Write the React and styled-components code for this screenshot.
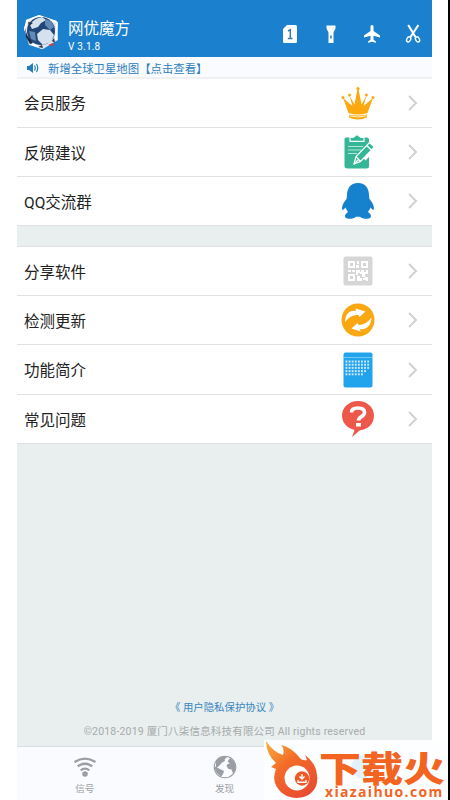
import React from "react";
import styled, { createGlobalStyle } from "styled-components";

const Global = createGlobalStyle`
  * { box-sizing: border-box; }
  body { margin: 0; background: #fff; font-family: Roboto, "Noto Sans CJK SC", sans-serif; overflow: hidden; }
  svg { display: block; flex: none; }
`;
const Page = styled.div`
  position: relative; width: 450px; height: 800px; padding: 0 16px 0 17px;
  background: #fff; border-right: 2px solid #000; overflow: hidden;
`;
const Screen = styled.main`
  width: 415px; height: 800px; display: flex; flex-direction: column; background: #e9eeee;
`;
const Header = styled.header`
  height: 57px; flex: none; display: flex; background: #1b80ce; color: #fff; padding: 13px 9px 0 6px;
`;
const Brand = styled.div`
  margin-left: 9px; flex: 1; padding-top: 5px;
`;
const Title = styled.h1`
  margin: 0; font-size: 15.5px; line-height: 22px; font-weight: 400;
`;
const Version = styled.div`
  font-size: 10px; line-height: 14px; letter-spacing: .2px;
`;
const Tools = styled.div`
  display: flex; gap: 21px; padding-top: 11px; height: 31px;
`;
const Notice = styled.div`
  height: 22px; flex: none; display: flex; align-items: center; background: #fafbfe;
  border-bottom: 2px solid #f0f1f2; color: #2b80bd; font-size: 11.4px; padding: 1px 0 0 9px; gap: 9px;
`;
const Group = styled.section`
  flex: none; background: #fff; margin-bottom: ${p => p.$gap || 0}px;
  border-top: ${p => (p.$line ? "1px solid #dfe2e2" : "0")};
`;
const Row = styled.div`
  height: ${p => p.$h || 49}px; border-bottom: 1px solid #e0e2e2; display: flex; align-items: center;
  padding: 0 13px 0 7px;
`;
const Label = styled.span`
  flex: 1; font-size: 15.5px; color: #222; line-height: 24px; padding-top: ${p => p.$drop}px;
`;
const IconSlot = styled.span`
  width: 36px; height: 38px; display: flex; align-items: center; justify-content: center; margin-right: 31px;
`;
const Legal = styled.footer`
  flex: 1; display: flex; flex-direction: column; justify-content: flex-end; align-items: center; padding-bottom: 6px;
`;
const Privacy = styled.div`
  color: #3687bf; font-size: 10.4px; line-height: 16px; margin-bottom: 8px; white-space: pre;
`;
const Copyright = styled.div`
  color: #a6abac; font-size: 10.5px; line-height: 16px; letter-spacing: .19px; white-space: nowrap;
`;
const Tabs = styled.nav`
  height: 54px; flex: none; display: flex; background: #fafbfe; border-top: 1px solid #d9dede;
  padding-right: 1px;
`;
const Tab = styled.div`
  flex: 1; display: flex; flex-direction: column; align-items: center; padding-top: 8px;
  color: ${p => (p.$active ? "#1b80ce" : "#9a9da3")}; font-size: 9.6px; line-height: 14px; gap: 3px;
  padding-right: ${p => p.$shift || 0}px;
`;
const Watermark = styled.aside`
  position: absolute; left: 264px; top: 740px; width: 184px; height: 60px;
  background: radial-gradient(circle at 99px 27px, #e2f1fb 0 11px, #fdfeff 12px);
  display: flex; padding: 0 0 0 2px;
`;
const WatermarkText = styled.div`
  width: 129px; color: #f2641f; padding-top: 10px;
`;
const WatermarkName = styled.div`
  font: 900 35px/34px "Noto Sans CJK SC", sans-serif; height: 34px; white-space: nowrap;
  width: 105px; transform: scaleX(1.2); transform-origin: left top;
`;
const WatermarkUrl = styled.div`
  font: 700 14px/15px "Open Sans", sans-serif; height: 15px; letter-spacing: 1.35px; padding-left: 6px; white-space: nowrap;
`;

const Logo = () => (
  <svg width="36" height="38" viewBox="0 0 36 38">
    <path d="M16 2 34 8 35 27 20 36 6 32 1 15 4 7Z" fill="#dce5f1" />
    <path d="M3 8 16 3 33 9M4 8 2 16 8 31 19 35M34 9 33 27" fill="none" stroke="#fff" strokeWidth="2" />
    <circle cx="18" cy="18" r="14" fill="#214777" />
    <path d="M7 12Q11 5 19 4L23 7 18 10 15 14 9 16ZM14 21 20 16 27 17 31 22 28 29 20 32 15 27Z" fill="#d5e1ee" />
    <path d="M22 6 28 8 31 14 27 17 22 12ZM6 18 12 19 13 28 8 26Z" fill="#6589b5" />
    <path d="M2 14 4 22 10 30 7 31 3 24Z" fill="#172744" />
    <path d="m5 9 5 1-4 3ZM29 28l2-3 1 5ZM15 34l4-2 1 3Z" fill="#27344e" />
    <path d="m25 32 5-2 1 3Z" fill="#d5383d" />
  </svg>
);
const Sim = () => (
  <svg width="20" height="20" viewBox="0 0 20 20"><path d="M7 1h8.500q1.500 0 1.500 1.500v15q0 1.500-1.500 1.500h-11Q3 19 3 17.500V5Z" fill="#fff" /><path d="m8 7 2.300-1.300V14M7.800 14.500h4.700" fill="none" stroke="#3b7da9" strokeWidth="1.500" /></svg>
);
const Torch = () => (
  <svg width="20" height="20" viewBox="0 0 20 20"><path d="M5.500 1.500h9v3l-2 4V19h-5V8.500l-2-4Z" fill="#fff" /><path d="M6 4h8" stroke="#d5eafa" strokeWidth=".7" /><ellipse cx="10" cy="13" rx=".9" ry="1.800" fill="#287dbb" /></svg>
);
const Plane = () => (
  <svg width="20" height="20" viewBox="0 0 20 20"><path d="M10 1c-1 0-1.500.8-1.500 2v4L2 11.500V13.500l6.500-1.800v4L6 17.500V18.800l4-1 4 1V17.500l-2.500-1.800v-4L18 13.500V11.500L11.500 7V3C11.500 1.800 11 1 10 1Z" fill="#fff" /></svg>
);
const Scissors = () => (
  <svg width="20" height="20" viewBox="0 0 20 20"><path d="M5.200 1 12.500 13M15.400 1 7.500 13" stroke="#fff" strokeWidth="2.100" /><ellipse cx="5.700" cy="15.400" rx="1.900" ry="2.700" transform="rotate(28 5.700 15.400)" fill="none" stroke="#fff" strokeWidth="1.400" /><ellipse cx="14.500" cy="15.400" rx="1.900" ry="2.700" transform="rotate(-28 14.500 15.400)" fill="none" stroke="#fff" strokeWidth="1.400" /></svg>
);
const Speaker = () => (
  <svg width="13" height="12" viewBox="0 0 13 12"><path d="M1 4h2l4-3v10L3 8H1Z" fill="#237db9" /><path d="M8.500 3.500q1.500 2.500 0 5M10.500 2q2.500 4 0 8" fill="none" stroke="#237db9" strokeWidth="1.200" /></svg>
);
const Chevron = () => <svg width="12" height="18" viewBox="0 0 12 18"><path d="m2 2 7 7-7 7" fill="none" stroke="#ced0d1" strokeWidth="1.900" /></svg>;

const Crown = () => (
  <svg width="34" height="34" viewBox="0 0 34 34"><g fill="#fba90e"><path d="M7.500 27 2 12 11.500 20 8.400 9.500 13.500 18.500 16.500 3h1l3 15.500 5.100-9-3.100 10.500L32 12 26.500 27Q17 30 7.500 27Z" /><circle cx="2" cy="11.500" r="1.500" /><circle cx="8.600" cy="9" r="1.500" /><circle cx="17" cy="2.600" r="1.600" /><circle cx="25.400" cy="9" r="1.500" /><circle cx="32" cy="11.500" r="1.500" /><path d="M8 28.500q9 2 18 0v3q-9 3.800-18 0Z" /></g><path d="M8.500 29.800q8.500 2.500 17 0" fill="none" stroke="#fff1c4" strokeWidth="1" /></svg>
);
const Clipboard = () => (
  <svg width="34" height="36" viewBox="0 0 34 36"><path d="M5 3.500h21q2 0 2 2V32q0 2.500-2.500 2.500h-19Q3.500 34.500 3.500 32V5Q3.500 3.500 5 3.500Z" fill="#35b797" /><path d="M9 3.500v3.800h14V3.500h-3L16 .5l-4 3Z" fill="#35b797" stroke="#f4fffc" strokeWidth="1.200" /><path d="M7 12.500h15M7 16h13M7 19.500h9" stroke="#b6e4d9" strokeWidth="1" /><path d="M22 24 33 12.500" stroke="#fff" strokeWidth="7" /><path d="m13 30 2-7.500L28.500 8.500l5 4.500-14 14.500Z" fill="#35b797" stroke="#fff" strokeWidth="1.200" /><path d="m15 22.500 4.500 5M13 30l4-4M25.500 11.500l5 4.500" stroke="#fff" strokeWidth="1.400" /></svg>
);
const Penguin = () => (
  <svg width="34" height="38" viewBox="0 0 34 38"><path d="M17 1C9 1 6 7 6 13.500L5.500 17C2 21 .5 25 1.300 27.500c.5 1 1.700.2 3-2L7 30c-3 2-3.700 4-2.500 5.500 1.500 2 8 1.800 10.500-.8h4c2.500 2.600 9 2.800 10.500.8C30.700 34 30 32 27 30l2.700-4.500c1.300 2.200 2.500 3 3 2C33.500 25 32 21 28.500 17L28 13.500C28 7 25 1 17 1Z" fill="#1681cd" /></svg>
);
const Qr = () => (
  <svg width="30" height="30" viewBox="0 0 30 30"><rect x=".5" y=".5" width="29" height="29" rx="2" fill="#d6d6d6" /><g fill="none" stroke="#fff" strokeWidth="2"><path d="M6 6h5v5H6ZM19 6h5v5h-5ZM6 19h5v5H6Z" /></g><g fill="#fff"><path d="M14 5h2v3h-2ZM13 9h3v3h-3ZM5 14h3v2H5ZM9 14h3v2H9ZM13 14h4v3h-2v2h-2ZM18 14h3v2h2v-2h2v4h-3v3h-3v-3h-2v-2h1ZM14 20h3v2h2v3h-5ZM20 22h2v-1h3v4h-2v-1h-3Z" /></g></svg>
);
const Refresh = () => (
  <svg width="34" height="34" viewBox="0 0 34 34"><circle cx="17" cy="17" r="16.500" fill="#faa712" /><path d="M4 19C4.500 10 9 7 15 8L14.500 5.500 24.500 8.500 18.500 14 17.500 12Q10 11 4 19Z" fill="#fff" /><path d="M30.500 14.500C30 23.500 25 27 19 26L19.500 28.500 10.500 25.500 16.500 20 17.500 22Q25 22 30.500 14.500Z" fill="#fff" /></svg>
);
const Calendar = () => (
  <svg width="30" height="36" viewBox="0 0 30 36"><rect x=".5" y=".5" width="29" height="35" rx="2" fill="#22a4ec" /><path d="M1 5.500h28" stroke="#72c8f4" strokeWidth="1" />
    <g fill="#c8e8fb">{Array.from({ length: 5 }).flatMap((_, row) => Array.from({ length: row < 3 ? 8 : row === 3 ? 7 : 6 }).map((__, col) => <rect key={`${row}-${col}`} x={2.5 + col * 3.1} y={8.5 + row * 3.2} width="1.900" height="2" />))}</g>
  </svg>
);
const Question = () => (
  <svg width="34" height="38" viewBox="0 0 34 38"><path d="M17 1C8 1 1 7.200 1 15.500 1 22.500 6 28 13.500 30L11 37l8-6.800C27 29.500 33 24 33 15.500 33 7.200 26 1 17 1Z" fill="#ed584b" /><path d="M10.500 12.500Q10.500 8 17 8t6.500 4.500c0 4.500-6 3.700-6 8" fill="none" stroke="#fff" strokeWidth="3.600" /><path d="M15 23h5v3.500h-5Z" fill="#fff" /></svg>
);
const Wifi = () => (
  <svg width="24" height="24" viewBox="0 0 24 24"><g fill="none" stroke="#9a9da3" strokeWidth="2.300"><path d="M1.500 7Q12 .2 22.500 7M4.700 11.300Q12 6.200 19.300 11.300M7.700 15.300Q12 12 16.300 15.300" /></g><circle cx="12" cy="19" r="2.800" fill="#9a9da3" /></svg>
);
const Globe = () => (
  <svg width="24" height="24" viewBox="0 0 24 24"><circle cx="12" cy="12" r="10.800" fill="#fafbfe" stroke="#9a9da3" strokeWidth="1.100" /><path d="M3 6Q6 2 11 1.500L14 2 11.500 4.500 12 6 9 7.500 6.500 10.500 4 12.500 7 14 11 16 10.500 18 8.500 21.500Q3 18.500 1.500 13L3 11ZM14.500 6.500 17 3Q22.500 6 22.500 12 22.500 16 20 18.500L18.500 14.500 15.500 14 13.500 11 14.500 9 17 8.500Z" fill="#9a9da3" /></svg>
);
const Flame = () => (
  <svg width="53" height="60" viewBox="0 0 53 60"><defs><linearGradient id="flameColor" x1="0" y1="0" x2=".7" y2="1"><stop stopColor="#f7b33b" /><stop offset=".45" stopColor="#f36b28" /><stop offset="1" stopColor="#e94d31" /></linearGradient></defs>
    <path d="M0 1Q7 12 17 15 19 9 15 5 25 7 33 17 36 21 41 20L39 15Q50 23 51 35C55 62 17 66 9 43Q7 36 10 29L5 27l5-4Q0 14 0 1Z" fill="url(#flameColor)" />
    <circle cx="31" cy="38" r="12.500" fill="#fff" /><circle cx="36" cy="38.500" r="7.200" fill="#ee5927" /><path d="M36 34v4M33.500 36.500l2.500 2.500 2.500-2.500M32 40v2.200h8V40" fill="none" stroke="#fff" strokeWidth="1.400" /></svg>
);

const mainItems = [
  ["会员服务", Crown, 49, 1],
  ["反馈建议", Clipboard, 49, 3],
  ["QQ交流群", Penguin, 49, 3],
];
const moreItems = [
  ["分享软件", Qr, 49, 3],
  ["检测更新", Refresh, 49, 3],
  ["功能简介", Calendar, 50, 3],
  ["常见问题", Question, 49, 3],
];
function MenuItem({ label, icon: Icon, height, drop }) {
  return <Row $h={height}><Label $drop={drop}>{label}</Label><IconSlot><Icon /></IconSlot><Chevron /></Row>;
}

export default function App() {
  return (
    <Page>
      <Global />
      <Screen>
        <Header><Logo /><Brand><Title>网优魔方</Title><Version>V 3.1.8</Version></Brand><Tools><Sim /><Torch /><Plane /><Scissors /></Tools></Header>
        <Notice><Speaker /><span>新增全球卫星地图【点击查看】</span></Notice>
        <Group $gap={20}>{mainItems.map(([label, icon, height, drop]) => <MenuItem key={label} label={label} icon={icon} height={height} drop={drop} />)}</Group>
        <Group $line>{moreItems.map(([label, icon, height, drop]) => <MenuItem key={label} label={label} icon={icon} height={height} drop={drop} />)}</Group>
        <Legal><Privacy>《 用户隐私保护协议 》</Privacy><Copyright>©2018-2019 厦门八柒信息科技有限公司 All rights reserved</Copyright></Legal>
        <Tabs><Tab $shift={4}><Wifi />信号</Tab><Tab $shift={3}><Globe />发现</Tab><Tab $active /></Tabs>
      </Screen>
      <Watermark><Flame /><WatermarkText><WatermarkName>下载火</WatermarkName><WatermarkUrl>xiazaihuo.com</WatermarkUrl></WatermarkText></Watermark>
    </Page>
  );
}
